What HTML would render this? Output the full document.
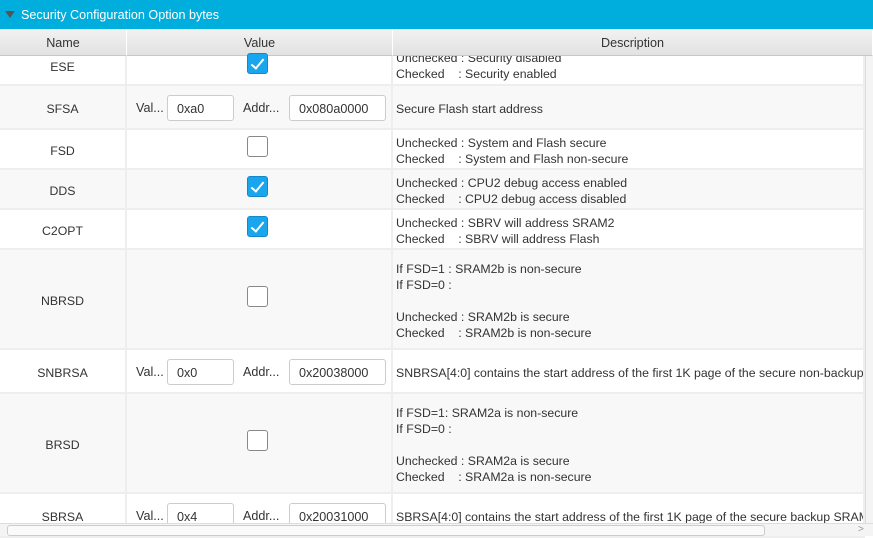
<!DOCTYPE html>
<html><head><style>
*{box-sizing:border-box;margin:0;padding:0}
body{width:873px;height:536px;overflow:hidden;background:#fff;font-family:"Liberation Sans",sans-serif;font-size:12.3px;color:#333;position:relative}
.abs{position:absolute}
.title{left:0;top:0;width:873px;height:29px;background:#00aedd;color:#fff;font-size:12.6px;line-height:30px;padding-left:21px}
.tri{left:5px;top:11px;width:0;height:0;border-left:5px solid transparent;border-right:5px solid transparent;border-top:7px solid #555}
.hdr{top:29px;height:27px;background:linear-gradient(#f2f2f2,#e2e2e2);border-bottom:1px solid #c8c8c8;border-right:1px solid #fff;text-align:center;line-height:28px;font-size:12.6px;color:#333}
.row{left:0;width:865px;border-bottom:2px solid #eee}
.cell{position:absolute;top:0;bottom:0;border-right:2px solid #eee;display:flex;align-items:center;padding-top:3px}
.n{left:0;width:127px;justify-content:center}
.v{left:127px;width:266px}
.d{left:393px;width:472px;padding-left:3px;line-height:16px;white-space:nowrap;overflow:hidden}
.cb{position:absolute;left:120px;width:21px;height:21px;border:1px solid #888;border-radius:3px;background:#fff}
.cb.on{background:#1aa6ee;border-color:#1688c8}
.cb.on:after{content:"";position:absolute;left:6px;top:2px;width:5px;height:11px;border:solid #fff;border-width:0 2px 2px 0;transform:rotate(40deg)}
.inp{position:absolute;height:26px;border:1px solid #ccc;border-radius:3px;background:#fff;line-height:26px;padding-left:9px;font-size:12.6px}
.lb{position:absolute;font-size:12.6px;top:15px}
</style></head><body>
<div class="abs title">Security Configuration Option bytes</div>
<div class="abs tri"></div>
<div class="abs hdr" style="left:0;width:127px">Name</div>
<div class="abs hdr" style="left:127px;width:266px">Value</div>
<div class="abs hdr" style="left:393px;width:480px">Description</div>

<div class="abs row" style="top:56px;height:30px;background:#fff"><div class="cell n" style="align-items:flex-start;padding-top:4px">ESE</div><div class="cell v"><div class="cb on" style="top:-3px"></div></div><div class="cell d" style="align-items:flex-start;padding-top:0"><div style="margin-top:-6px">Unchecked : Security disabled<br>Checked &nbsp;&nbsp;&nbsp;: Security enabled</div></div></div>

<div class="abs row" style="top:86px;height:44px;background:#f8f8f8"><div class="cell n">SFSA</div><div class="cell v"><span class="lb" style="left:9px">Val...</span><div class="inp" style="left:40px;top:9px;width:67px">0xa0</div><span class="lb" style="left:116px">Addr...</span><div class="inp" style="left:162px;top:9px;width:97px">0x080a0000</div></div><div class="cell d">Secure Flash start address</div></div>

<div class="abs row" style="top:130px;height:40px;background:#fff"><div class="cell n">FSD</div><div class="cell v"><div class="cb" style="top:6px"></div></div><div class="cell d"><div>Unchecked : System and Flash secure<br>Checked &nbsp;&nbsp;&nbsp;: System and Flash non-secure</div></div></div>

<div class="abs row" style="top:170px;height:40px;background:#f8f8f8"><div class="cell n">DDS</div><div class="cell v"><div class="cb on" style="top:6px"></div></div><div class="cell d"><div>Unchecked : CPU2 debug access enabled<br>Checked &nbsp;&nbsp;&nbsp;: CPU2 debug access disabled</div></div></div>

<div class="abs row" style="top:210px;height:40px;background:#fff"><div class="cell n">C2OPT</div><div class="cell v"><div class="cb on" style="top:6px"></div></div><div class="cell d"><div>Unchecked : SBRV will address SRAM2<br>Checked &nbsp;&nbsp;&nbsp;: SBRV will address Flash</div></div></div>

<div class="abs row" style="top:250px;height:100px;background:#f8f8f8"><div class="cell n">NBRSD</div><div class="cell v"><div class="cb" style="top:36px"></div></div><div class="cell d"><div>If FSD=1 : SRAM2b is non-secure<br>If FSD=0 :<br><br>Unchecked : SRAM2b is secure<br>Checked &nbsp;&nbsp;&nbsp;: SRAM2b is non-secure</div></div></div>

<div class="abs row" style="top:350px;height:44px;background:#fff"><div class="cell n">SNBRSA</div><div class="cell v"><span class="lb" style="left:9px">Val...</span><div class="inp" style="left:40px;top:9px;width:67px">0x0</div><span class="lb" style="left:116px">Addr...</span><div class="inp" style="left:162px;top:9px;width:97px">0x20038000</div></div><div class="cell d">SNBRSA[4:0] contains the start address of the first 1K page of the secure non-backup SRAM2</div></div>

<div class="abs row" style="top:394px;height:100px;background:#f8f8f8"><div class="cell n">BRSD</div><div class="cell v"><div class="cb" style="top:36px"></div></div><div class="cell d"><div>If FSD=1: SRAM2a is non-secure<br>If FSD=0 :<br><br>Unchecked : SRAM2a is secure<br>Checked &nbsp;&nbsp;&nbsp;: SRAM2a is non-secure</div></div></div>

<div class="abs row" style="top:494px;height:44px;background:#fff"><div class="cell n">SBRSA</div><div class="cell v"><span class="lb" style="left:9px">Val...</span><div class="inp" style="left:40px;top:9px;width:67px">0x4</div><span class="lb" style="left:116px">Addr...</span><div class="inp" style="left:162px;top:9px;width:97px">0x20031000</div></div><div class="cell d">SBRSA[4:0] contains the start address of the first 1K page of the secure backup SRAM2</div></div>

<div class="abs" style="left:865px;top:56px;width:8px;height:468px;background:#f4f4f4;border-left:1px solid #ddd"></div>
<div class="abs" style="left:0;top:523px;width:873px;height:13px;background:#f4f4f4;border-top:1px solid #ddd"></div>
<div class="abs" style="left:7px;top:525px;width:758px;height:11px;background:#fafafa;border:1px solid #ccc;border-radius:3px"></div>
<div class="abs" style="left:858px;top:524px;font-size:10px;color:#999">&gt;</div>
</body></html>
